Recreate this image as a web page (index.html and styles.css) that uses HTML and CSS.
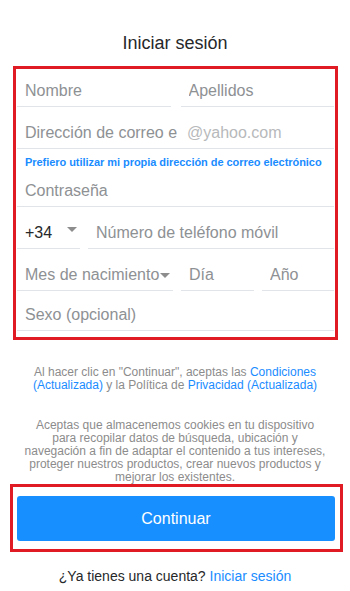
FILE: index.html
```html
<!DOCTYPE html>
<html lang="es">
<head>
<meta charset="utf-8">
<title>Iniciar sesión</title>
<link rel="stylesheet" href="styles.css">
</head>
<body>
<main class="page">
  <h1 class="title">Iniciar sesión</h1>

  <form class="highlight form">
    <div class="row row-two">
      <input class="field field-tight" type="text" placeholder="Nombre">
      <input class="field field-tight" type="text" placeholder="Apellidos">
    </div>

    <div class="email-row">
      <input class="email-input" type="text" placeholder="Dirección de correo electrónico">
      <span class="domain">@yahoo.com</span>
    </div>

    <a class="alt-link" href="#">Prefiero utilizar mi propia dirección de correo electrónico</a>

    <input class="field field-tight" type="password" placeholder="Contraseña">

    <div class="row row-phone">
      <div class="field select select-phone">
        <span class="value">+34</span>
        <svg class="caret caret-phone" width="10" height="5" viewBox="0 0 10 5"><path d="M0 0H10L5 5Z" fill="#8d8d8d"/></svg>
      </div>
      <input class="field" type="tel" placeholder="Número de teléfono móvil">
    </div>

    <div class="row row-birth">
      <div class="field select select-month">
        <span class="muted">Mes de nacimiento</span>
        <svg class="caret caret-month" width="10" height="5" viewBox="0 0 10 5"><path d="M0 0H10L5 5Z" fill="#8d8d8d"/></svg>
      </div>
      <input class="field" type="text" placeholder="Día">
      <input class="field" type="text" placeholder="Año">
    </div>

    <input class="field field-last" type="text" placeholder="Sexo (opcional)">
  </form>

  <p class="note terms">Al hacer clic en "Continuar", aceptas las <a href="#">Condiciones</a><br><a href="#">(Actualizada)</a> y la Política de <a href="#">Privacidad</a> <a href="#">(Actualizada)</a></p>

  <p class="note cookies">Aceptas que almacenemos cookies en tu dispositivo<br>para recopilar datos de búsqueda, ubicación y<br>navegación a fin de adaptar el contenido a tus intereses,<br>proteger nuestros productos, crear nuevos productos y<br>mejorar los existentes.</p>

  <div class="highlight btn-wrap">
    <button class="btn" type="button">Continuar</button>
  </div>

  <p class="signin">¿Ya tienes una cuenta? <a href="#">Iniciar sesión</a></p>
</main>
</body>
</html>
```

FILE: styles.css
```css
* { box-sizing: border-box; }

html, body {
  margin: 0;
  padding: 0;
  background: #ffffff;
}

body {
  font-family: "Liberation Sans", Arial, sans-serif;
  color: #26282a;
  width: 350px;
  height: 591px;
  overflow: hidden;
}

.page {
  display: flex;
  flex-direction: column;
}

.title {
  margin: 32px 0 12px;
  font-size: 18px;
  line-height: 22px;
  font-weight: normal;
  text-align: center;
  color: #26282a;
}

.highlight {
  border: 3px solid #e01b24;
}

.form {
  margin: 0 0 0 13px;
  width: 325px;
  padding: 0 1px 6px;
  display: flex;
  flex-direction: column;
}

.row {
  display: flex;
  gap: 10px;
}

.row-two .field { flex: 1; min-width: 0; }

.row-phone { gap: 8px; }
.row-phone .select { width: 63px; flex: none; }
.row-phone .field:last-child { flex: 1; min-width: 0; }

.row-birth {
  display: grid;
  grid-template-columns: 156px 73px 1fr;
  gap: 8px;
}

.field {
  display: block;
  width: 100%;
  height: 42px;
  margin: 0;
  padding: 16px 8px 5px;
  border: 0;
  border-bottom: 1px solid #e1e4e8;
  border-radius: 0;
  background: transparent;
  font-family: "Liberation Sans", Arial, sans-serif;
  font-size: 16px;
  line-height: 20px;
  color: #26282a;
  outline: none;
}

.field-tight {
  height: 38px;
  padding-top: 12px;
}

.field-last {
  height: 40px;
  padding-top: 14px;
}

.field::placeholder,
.email-input::placeholder {
  color: #8e9194;
  opacity: 1;
}

.email-row {
  display: flex;
  align-items: center;
  height: 42px;
  padding: 16px 0 5px;
  border-bottom: 1px solid #e1e4e8;
}

.email-input {
  flex: none;
  width: 160px;
  height: 20px;
  margin: 0;
  padding: 0 0 0 8px;
  border: 0;
  background: transparent;
  font-family: "Liberation Sans", Arial, sans-serif;
  font-size: 16px;
  line-height: 20px;
  outline: none;
}

.domain {
  margin-left: 10px;
  font-size: 16px;
  line-height: 20px;
  color: #b7b9bb;
}

.alt-link {
  display: block;
  padding: 6px 8px 0;
  height: 20px;
  font-size: 11px;
  line-height: 14px;
  font-weight: bold;
  letter-spacing: -0.05px;
  color: #1a8cff;
  text-decoration: none;
  white-space: nowrap;
}

.select {
  display: flex;
  align-items: center;
  white-space: nowrap;
}

.select span { flex: none; }

.select-phone { padding-right: 3px; }
.select-month { padding-right: 0; }

.select .value { color: #26282a; }
.select .muted { color: #8e9194; }

.caret { flex: none; display: block; }

.caret-phone {
  margin-left: auto;
  margin-bottom: 7px;
}

.caret-month {
  margin-left: 1px;
}

.note {
  width: 320px;
  margin: 0 auto;
  font-size: 12px;
  line-height: 13px;
  text-align: center;
  white-space: nowrap;
  color: #8c8c8c;
}

.note a {
  color: #1a8cff;
  text-decoration: none;
}

.terms { margin-top: 26px; }
.cookies { margin-top: 27px; }

.btn-wrap {
  margin: 0 0 0 10px;
  width: 333px;
  padding: 9px 5px 8px 4px;
}

.btn {
  display: block;
  width: 100%;
  height: 45px;
  margin: 0;
  border: 0;
  border-radius: 3px;
  background: #188fff;
  color: #ffffff;
  font-family: "Liberation Sans", Arial, sans-serif;
  font-size: 16px;
  line-height: 20px;
  cursor: pointer;
}

.signin {
  margin: 15px 0 0;
  font-size: 14px;
  line-height: 18px;
  text-align: center;
  color: #26282a;
}

.signin a {
  color: #1a8cff;
  text-decoration: none;
}
```
